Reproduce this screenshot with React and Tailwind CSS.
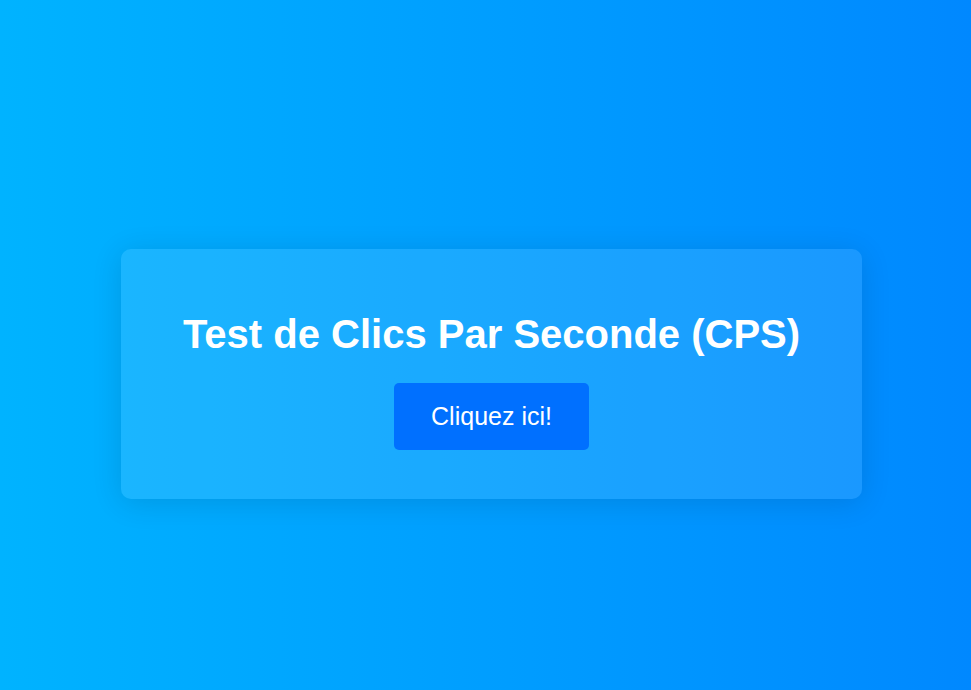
const App = () => {
  return (
    <div
      className="min-h-screen w-full flex items-center justify-center pl-[12px] pt-[58px] bg-gradient-to-r from-[#00b3ff] to-[#0088ff]"
      style={{ fontFamily: '"Liberation Sans", Arial, sans-serif' }}
    >
      <div className="w-[741px] h-[250px] rounded-[10px] bg-white/10 shadow-[0_4px_30px_rgba(0,0,0,0.12)] flex flex-col items-center pt-[62px]">
        <h1 className="text-[40px] leading-[46px] font-bold text-white">
          Test de Clics Par Seconde (CPS)
        </h1>
        <button className="mt-[26px] w-[195px] h-[67px] rounded-[5px] bg-[#0070ff] text-white text-[25px]">
          Cliquez ici!
        </button>
      </div>
    </div>
  );
};

export default App;
